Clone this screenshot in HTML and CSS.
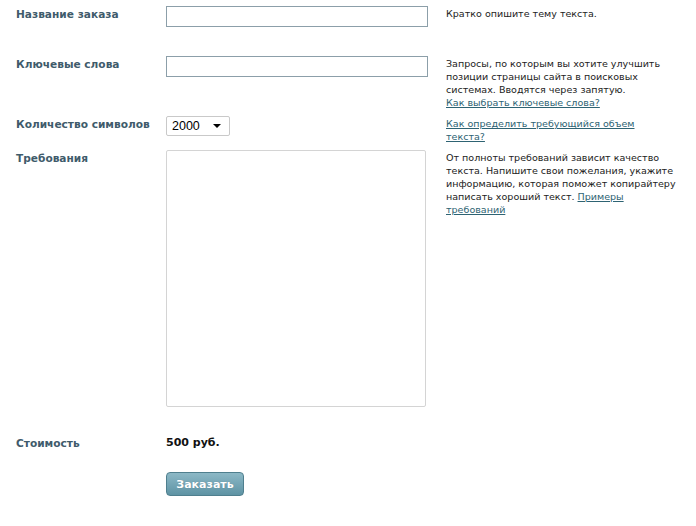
FILE: index.html
```html
<!DOCTYPE html>
<html lang="ru">
<head>
<meta charset="utf-8">
<title>Заказ текста</title>
<link rel="stylesheet" href="styles.css">
</head>
<body>
<form class="order">
  <div class="row row-first">
    <label class="label" for="f-title">Название заказа</label>
    <div class="field"><input id="f-title" class="text" type="text"></div>
    <div class="help">Кратко опишите тему текста.</div>
  </div>
  <div class="row">
    <label class="label" for="f-keys">Ключевые слова</label>
    <div class="field"><input id="f-keys" class="text" type="text"></div>
    <div class="help">Запросы, по которым вы хотите улучшить позиции страницы сайта в поисковых системах. Вводятся через запятую.<br><a href="#">Как выбрать ключевые слова?</a></div>
  </div>
  <div class="row">
    <label class="label" for="f-count">Количество символов</label>
    <div class="field">
      <div class="select"><span>2000</span><svg width="8" height="4" viewBox="0 0 8 4"><path d="M0 0h8L4 4z" fill="#000"/></svg></div>
    </div>
    <div class="help"><a href="#">Как определить требующийся объем<br>текста?</a></div>
  </div>
  <div class="row">
    <label class="label" for="f-req">Требования</label>
    <div class="field"><textarea id="f-req" class="area"></textarea></div>
    <div class="help">От полноты требований зависит качество текста. Напишите свои пожелания, укажите информацию, которая поможет копирайтеру написать хороший текст. <a href="#">Примеры требований</a></div>
  </div>
  <div class="row row-cost">
    <div class="label">Стоимость</div>
    <div class="field price">500 руб.</div>
  </div>
  <div class="row row-btn">
    <div class="label"></div>
    <div class="field"><button type="button" class="btn">Заказать</button></div>
  </div>
</form>
</body>
</html>
```
FILE: styles.css
```css
html, body {
  margin: 0;
  background: #fff;
}
body {
  padding: 6px 0 0 16px;
  font-family: "DejaVu Sans", Verdana, sans-serif;
}
.order {
  display: flex;
  flex-direction: column;
}
.row {
  display: grid;
  grid-template-columns: 150px 280px 234px;
  align-items: start;
  margin-bottom: 7px;
}
.row-first {
  min-height: 43px;
}
.label {
  font-size: 10.6px;
  font-weight: bold;
  color: #3f5b6b;
  line-height: 14px;
  padding-top: 1px;
}
.help {
  font-size: 9.55px;
  line-height: 13px;
  color: #222;
  padding-top: 1px;
}
.help a {
  color: #2e6373;
  text-decoration: underline;
}
.text {
  display: block;
  box-sizing: border-box;
  width: 262px;
  height: 21px;
  margin: 0;
  border: 1px solid #8c9fa9;
  padding: 0 3px;
  background: #fff;
}
.select {
  box-sizing: border-box;
  width: 64px;
  height: 20px;
  border: 1px solid #c9c9c9;
  border-radius: 2px;
  display: flex;
  align-items: center;
  justify-content: space-between;
  padding: 0 8px 0 5px;
  font-family: "Liberation Sans", Arial, sans-serif;
  font-size: 12.5px;
  color: #000;
}
.area {
  display: block;
  box-sizing: border-box;
  width: 260px;
  height: 257px;
  margin: 0;
  border: 1px solid #d4d4d4;
  border-radius: 2px;
  resize: none;
  background: #fff;
}
.row-cost {
  margin-top: 21px;
  margin-bottom: 22px;
}
.price {
  font-size: 11px;
  font-weight: bold;
  color: #111;
  line-height: 14px;
  padding-top: 1px;
}
.btn {
  width: 78px;
  height: 24px;
  margin: 0;
  padding: 0;
  border: 1px solid #4f7f8e;
  border-radius: 4px;
  background: linear-gradient(#8cb8c6, #5e93a4);
  color: #fff;
  font-family: "DejaVu Sans", Verdana, sans-serif;
  font-size: 11px;
  font-weight: bold;
  text-shadow: 0 0 1px rgba(0,0,0,0.2);
}
```
